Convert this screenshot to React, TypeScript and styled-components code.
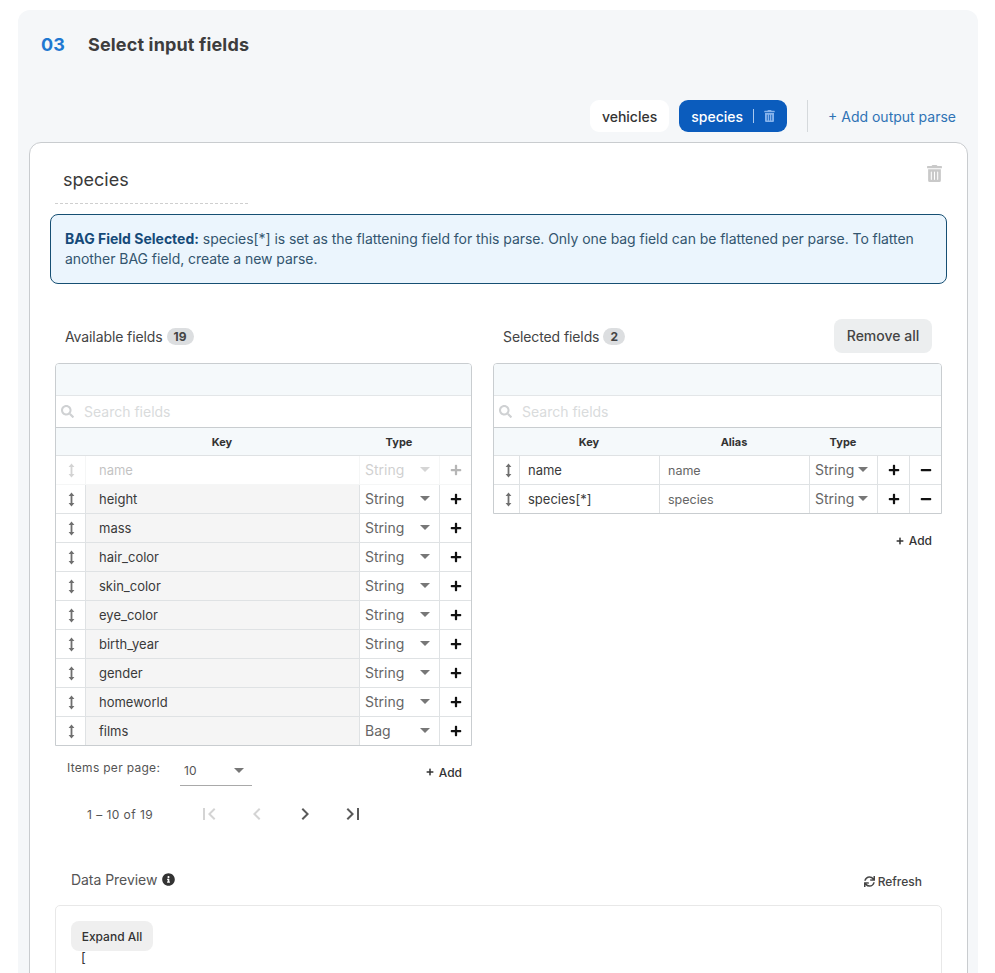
import React from "react";
import styled, { createGlobalStyle } from "styled-components";
import { FaPlus, FaMinus, FaTrashAlt, FaSearch, FaInfoCircle, FaSync } from "react-icons/fa";

const Global = createGlobalStyle`
  html, body { margin: 0; padding: 0; background: #fff; height: 973px; overflow: hidden; }
  body { font-family: Inter, "Liberation Sans", sans-serif; color: #3a3a3a; }
  * { box-sizing: border-box; }
`;

const Panel = styled.section`
  margin: 10px 17px 0 18px;
  height: 1000px;
  padding: 0 10px 0 11px;
  background: #f5f7f9;
  border-radius: 12px;
`;
const Header = styled.header`
  display: flex;
  align-items: center;
  height: 68px;
  padding-left: 12px;
  font-size: 18px;
  font-weight: 700;
`;
const Step = styled.span`
  width: 47px;
  color: #1f78d1;
`;
const Title = styled.h2`
  margin: 0;
  font-size: 18px;
  font-weight: 700;
  letter-spacing: 0.15px;
  color: #3d3d3d;
`;
const Tabs = styled.div`
  display: flex;
  justify-content: flex-end;
  align-items: center;
  margin-top: 22px;
  height: 32px;
  padding-right: 12px;
`;
const Tab = styled.div<{ $active?: boolean }>`
  display: flex;
  align-items: center;
  height: 32px;
  padding: 0 12px;
  margin-right: 10px;
  border-radius: 9px;
  font-size: 14px;
  font-weight: 500;
  background: ${(p) => (p.$active ? "#0b5cbd" : "#fff")};
  color: ${(p) => (p.$active ? "#fff" : "#333")};
  &:nth-child(2) { margin-right: 20px; }
`;
const TabDivider = styled.span`
  width: 1px;
  height: 14px;
  margin: 0 10px;
  background: #a9c8ee;
`;
const TabTrash = styled(FaTrashAlt)`
  width: 11px;
  height: 12px;
  color: #86b3ec;
`;
const VRule = styled.span`
  width: 1px;
  height: 32px;
  background: #d5d9dc;
  margin-right: 20px;
`;
const AddParse = styled.a`
  font-size: 14px;
  color: #2f73b5;
`;
const Card = styled.div`
  position: relative;
  margin-top: 10px;
  height: 900px;
  padding: 0 20px;
  background: #fff;
  border: 1px solid #c9cccf;
  border-radius: 12px;
`;
const NameField = styled.div`
  width: 193px;
  margin-left: 5px;
  height: 61px;
  padding: 25px 0 0 8px;
  font-size: 18px;
  line-height: 24px;
  color: #3a3a3a;
  border-bottom: 1px dashed #cfcfcf;
`;
const CardTrash = styled(FaTrashAlt)`
  position: absolute;
  top: 22px;
  right: 25px;
  width: 15px;
  height: 17px;
  color: #c9c9c9;
`;
const Alert = styled.div`
  margin-top: 10px;
  height: 70px;
  padding: 14px 14px;
  background: #ebf5fd;
  border: 1px solid #164f73;
  border-radius: 8px;
  font-size: 14px;
  line-height: 20px;
  letter-spacing: -0.06px;
  color: #33556f;
`;
const AlertHead = styled.b`
  font-weight: 700;
  letter-spacing: 0;
  color: #154a79;
`;
const Columns = styled.div`
  display: grid;
  grid-template-columns: 417px 449px;
  gap: 21px;
  padding: 0 5px;
  margin-top: 35px;
`;
const ColumnHead = styled.div`
  display: flex;
  align-items: center;
  height: 34px;
  padding-left: 10px;
  margin-bottom: 10px;
  font-size: 14px;
  letter-spacing: -0.1px;
  color: #444;
`;
const Count = styled.span`
  display: inline-flex;
  justify-content: center;
  align-items: center;
  min-width: 21px;
  height: 17px;
  padding: 0 7px;
  margin-left: 4px;
  border-radius: 9px;
  background: #dcdee0;
  font-size: 12px;
  font-weight: 700;
  letter-spacing: 0;
  color: #444;
`;
const RemoveAll = styled.button`
  margin-left: auto;
  margin-right: 10px;
  width: 98px;
  height: 34px;
  padding: 0 0 1px;
  border: 0;
  border-radius: 8px;
  background: #eceeef;
  font: 500 14px Inter, sans-serif;
  color: #444;
`;
const Table = styled.div`
  border: 1px solid #c9cdd0;
  border-radius: 4px 4px 0 0;
  overflow: hidden;
`;
const Band = styled.div`
  height: 32px;
  background: #f5f9fb;
  border-bottom: 1px solid #e3e6e8;
`;
const Search = styled.div`
  display: flex;
  align-items: center;
  height: 32px;
  padding: 0 0 0 5px;
  font-size: 14px;
  color: #d9dbdc;
  border-bottom: 1px solid #c9cdd0;
`;
const SearchIcon = styled(FaSearch)`
  width: 13px;
  height: 13px;
  margin-right: 10px;
  color: #cfd1d3;
`;
const Row = styled.div<{ $cols: string; $head?: boolean; $disabled?: boolean }>`
  display: grid;
  grid-template-columns: ${(p) => p.$cols};
  height: ${(p) => (p.$head ? 28 : 29)}px;
  background: ${(p) => (p.$head ? "#f5f9fb" : "#fff")};
  font-size: ${(p) => (p.$head ? 11 : 13)}px;
  border-bottom: 1px solid #dfe2e4;
  opacity: ${(p) => (p.$disabled ? 0.3 : 1)};
  &:last-child { border-bottom: 0; height: 28px; }
`;
const HeadCell = styled.div`
  display: flex;
  justify-content: center;
  align-items: center;
  font-weight: 700;
  color: #333;
`;
const Cell = styled.div<{ $shade?: boolean; $tone?: string; $inset?: number; $size?: number }>`
  display: flex;
  align-items: center;
  padding: 0 ${(p) => p.$inset ?? 13}px;
  border-left: 1px solid #dfe2e4;
  background: ${(p) => (p.$shade ? "#f5f5f5" : "transparent")};
  color: ${(p) => p.$tone ?? "#3a3a3a"};
  font-size: ${(p) => p.$size ?? 13}px;
  font-weight: 400;
  &:first-child { border-left: 0; }
`;
const IconCell = styled(Cell)<{ $shift?: number }>`
  justify-content: center;
  padding: 0 0 0 ${(p) => p.$shift ?? 0}px;
`;
const TypeCell = styled(Cell)`
  justify-content: space-between;
  padding: 0 9px 1px 5px;
  font-size: 14px;
  color: #666;
`;
const Caret = styled.span`
  width: 0;
  height: 0;
  border-left: 5px solid transparent;
  border-right: 5px solid transparent;
  border-top: 5px solid #777;
`;
const HandleSvg = styled.svg`
  width: 7px;
  height: 15px;
  color: #6f6f6f;
`;
const Handle = () => (
  <HandleSvg viewBox="0 0 7 15" fill="currentColor">
    <path d="M3.5 0.5 L6.4 4 H4.4 V11 H6.4 L3.5 14.5 L0.6 11 H2.6 V4 H0.6 Z" />
  </HandleSvg>
);
const PlusIcon = styled(FaPlus)`
  width: 12px;
  height: 12px;
  color: #111;
`;
const MinusIcon = styled(FaMinus)`
  width: 12px;
  height: 12px;
  color: #111;
`;
const AddButton = styled.div`
  display: flex;
  align-items: center;
  gap: 5px;
  font-size: 12px;
  font-weight: 500;
  color: #333;
`;
const AddSmallIcon = styled(FaPlus)`
  width: 8px;
  height: 8px;
`;
const AddRight = styled.div`
  display: flex;
  justify-content: flex-end;
  padding: 19px 10px 0 0;
`;
const PagerTop = styled.div`
  display: flex;
  height: 40px;
  padding-left: 12px;
  font-size: 12px;
  color: #555;
`;
const PagerLabel = styled.span`
  margin-top: 14px;
  letter-spacing: 0.3px;
  width: 113px;
`;
const PagerSelect = styled.div`
  display: flex;
  justify-content: space-between;
  align-items: center;
  width: 72px;
  height: 30px;
  margin-top: 10px;
  padding: 0 8px 0 4px;
  border-bottom: 1px solid #a9a9a9;
`;
const PagerAdd = styled(AddButton)`
  margin: 18px 0 0 auto;
  height: 16px;
  padding-right: 10px;
`;
const PagerBottom = styled.div`
  display: flex;
  align-items: center;
  height: 40px;
  padding-left: 32px;
  margin-top: 8px;
  font-size: 12px;
  color: #555;
`;
const RangeLabel = styled.span`
  width: 98px;
  letter-spacing: 0.45px;
`;
const PageButton = styled.button<{ $off?: boolean }>`
  display: flex;
  justify-content: center;
  align-items: center;
  width: 48px;
  height: 24px;
  padding: 0;
  border: 0;
  background: none;
  color: ${(p) => (p.$off ? "#d4d4d4" : "#5a5a5a")};
`;
const PreviewHead = styled.div`
  display: flex;
  justify-content: space-between;
  align-items: center;
  height: 28px;
  margin-top: 31px;
  padding: 0 25px 0 21px;
`;
const PreviewTitle = styled.div`
  display: flex;
  align-items: center;
  gap: 5px;
  font-size: 14px;
  letter-spacing: -0.05px;
  color: #555;
`;
const InfoIcon = styled(FaInfoCircle)`
  width: 13px;
  height: 13px;
  color: #333;
`;
const Refresh = styled.div`
  display: flex;
  align-items: center;
  gap: 3px;
  padding-top: 4px;
  font-size: 12px;
  font-weight: 500;
  color: #444;
`;
const RefreshIcon = styled(FaSync)`
  width: 11px;
  height: 11px;
`;
const Preview = styled.div`
  margin: 12px 5px 0;
  height: 200px;
  padding: 15px 15px;
  border: 1px solid #e8e8e8;
  border-radius: 5px 5px 0 0;
`;
const Expand = styled.button`
  display: block;
  width: 82px;
  height: 30px;
  border: 0;
  border-radius: 8px;
  background: #efefef;
  font: 500 12px Inter, sans-serif;
  color: #333;
`;
const Code = styled.div`
  margin-left: 10px;
  font-size: 13px;
  line-height: 13px;
  color: #333;
`;

const Chevron = ({ d }: { d: string }) => (
  <svg width="24" height="24" viewBox="0 0 24 24" fill="currentColor"><path d={d} /></svg>
);

const leftCols = "29px 274px 80px 1fr";
const rightCols = "25px 140px 150px 68px 32px 1fr";
const fields: [string, string][] = [
  ["height", "String"], ["mass", "String"], ["hair_color", "String"], ["skin_color", "String"],
  ["eye_color", "String"], ["birth_year", "String"], ["gender", "String"], ["homeworld", "String"], ["films", "Bag"],
];

const LeftRow = ({ name, type, disabled }: { name: string; type: string; disabled?: boolean }) => (
  <Row $cols={leftCols} $disabled={disabled}>
    <IconCell $shift={1}><Handle /></IconCell>
    <Cell $shade={!disabled}>{name}</Cell>
    <TypeCell>{type}<Caret /></TypeCell>
    <IconCell><PlusIcon /></IconCell>
  </Row>
);
const RightRow = ({ name, alias }: { name: string; alias: string }) => (
  <Row $cols={rightCols}>
    <IconCell $shift={4}><Handle /></IconCell>
    <Cell $inset={8}>{name}</Cell>
    <Cell $inset={8} $tone="#666" $size={12.5}>{alias}</Cell>
    <TypeCell>String<Caret /></TypeCell>
    <IconCell><PlusIcon /></IconCell>
    <IconCell><MinusIcon /></IconCell>
  </Row>
);

export default function App() {
  return (
    <>
      <Global />
      <Panel>
        <Header><Step>03</Step><Title>Select input fields</Title></Header>
        <Tabs>
          <Tab>vehicles</Tab>
          <Tab $active>species<TabDivider /><TabTrash /></Tab>
          <VRule />
          <AddParse>+ Add output parse</AddParse>
        </Tabs>
        <Card>
          <NameField>species</NameField>
          <CardTrash />
          <Alert>
            <AlertHead>BAG Field Selected:</AlertHead> species[*] is set as the flattening field for this parse. Only one bag field can be flattened per parse. To flatten another BAG field, create a new parse.
          </Alert>
          <Columns>
            <div>
              <ColumnHead>Available fields <Count>19</Count></ColumnHead>
              <Table>
                <Band />
                <Search><SearchIcon />Search fields</Search>
                <Row $cols={leftCols} $head>
                  <HeadCell /><HeadCell>Key</HeadCell><HeadCell>Type</HeadCell><HeadCell />
                </Row>
                <LeftRow name="name" type="String" disabled />
                {fields.map(([n, t]) => <LeftRow key={n} name={n} type={t} />)}
              </Table>
              <PagerTop>
                <PagerLabel>Items per page:</PagerLabel>
                <PagerSelect>10<Caret /></PagerSelect>
                <PagerAdd><AddSmallIcon />Add</PagerAdd>
              </PagerTop>
              <PagerBottom>
                <RangeLabel>1 – 10 of 19</RangeLabel>
                <PageButton $off><Chevron d="M18.41 16.59L13.82 12l4.59-4.59L17 6l-6 6 6 6zM6 6h2v12H6z" /></PageButton>
                <PageButton $off><Chevron d="M15.41 7.41L14 6l-6 6 6 6 1.41-1.41L10.83 12z" /></PageButton>
                <PageButton><Chevron d="M10 6L8.59 7.41 13.17 12l-4.58 4.59L10 18l6-6z" /></PageButton>
                <PageButton><Chevron d="M5.59 7.41L10.18 12l-4.59 4.59L7 18l6-6-6-6zM16 6h2v12h-2z" /></PageButton>
              </PagerBottom>
            </div>
            <div>
              <ColumnHead>Selected fields <Count>2</Count><RemoveAll>Remove all</RemoveAll></ColumnHead>
              <Table>
                <Band />
                <Search><SearchIcon />Search fields</Search>
                <Row $cols={rightCols} $head>
                  <HeadCell /><HeadCell>Key</HeadCell><HeadCell>Alias</HeadCell><HeadCell>Type</HeadCell><HeadCell /><HeadCell />
                </Row>
                <RightRow name="name" alias="name" />
                <RightRow name="species[*]" alias="species" />
              </Table>
              <AddRight><AddButton><AddSmallIcon />Add</AddButton></AddRight>
            </div>
          </Columns>
          <PreviewHead>
            <PreviewTitle>Data Preview <InfoIcon /></PreviewTitle>
            <Refresh><RefreshIcon />Refresh</Refresh>
          </PreviewHead>
          <Preview>
            <Expand>Expand All</Expand>
            <Code>[</Code>
          </Preview>
        </Card>
      </Panel>
    </>
  );
}
